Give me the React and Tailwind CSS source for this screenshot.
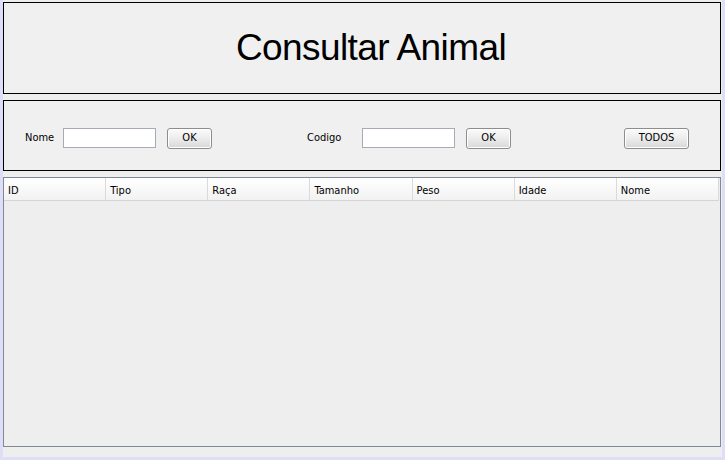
import React from 'react'

const cols = ['ID', 'Tipo', 'Raça', 'Tamanho', 'Peso', 'Idade', 'Nome']

function SwingButton({ children, className = '' }) {
  return (
    <button
      className={`h-[21px] rounded-[3px] border border-[#8d8d8d] bg-gradient-to-b from-[#fbfbfb] via-[#ececec] to-[#d8d8d8] pt-[1px] text-[11px] text-black shadow-[inset_0_0_0_1px_#ffffff] ${className}`}
    >
      {children}
    </button>
  )
}

export default function App() {
  return (
    <div className="w-[725px] h-[460px] bg-[#dedef8] pl-[3px] pr-[3px] pb-[3px] font-['DejaVu_Sans_Condensed','DejaVu_Sans',sans-serif]">
      <div className="h-full bg-[#eeeeee] flex flex-col pt-[2px] pr-[1px]">
        {/* title */}
        <div className="h-[92px] border border-black bg-[#f0f0f0] flex items-center justify-center pl-[18px]">
          <h1 className="text-[37px] text-black font-['Liberation_Sans',sans-serif] tracking-[-0.6px]">
            Consultar Animal
          </h1>
        </div>

        {/* filtros */}
        <div className="mt-[6px] h-[71px] border border-black bg-[#f0f0f0] flex items-center pt-[5px] text-[11px] text-black">
          <span className="ml-[21px] w-[38px] pt-[1px]">Nome</span>
          <input className="w-[93px] h-[20px] border border-[#a5acb5] bg-white outline-none" />
          <SwingButton className="ml-[11px] w-[45px]">OK</SwingButton>
          <span className="ml-[95px] w-[55px] pt-[1px]">Codigo</span>
          <input className="w-[93px] h-[20px] border border-[#a5acb5] bg-white outline-none" />
          <SwingButton className="ml-[11px] w-[45px]">OK</SwingButton>
          <SwingButton className="ml-[113px] w-[65px]">TODOS</SwingButton>
        </div>

        {/* tabela */}
        <div className="mt-[6px] h-[270px] border border-[#7f8a96] bg-[#eeeeee] pr-[1px]">
          <div className="flex h-[23px] bg-gradient-to-b from-white to-[#f2f2f2] border-b border-[#d5d5d5]">
            {cols.map((c) => (
              <div
                key={c}
                className="flex-1 flex items-center pl-[4px] pt-[5px] text-[11px] text-black border-r border-[#dadada]"
              >
                {c}
              </div>
            ))}
          </div>
        </div>
      </div>
    </div>
  )
}
